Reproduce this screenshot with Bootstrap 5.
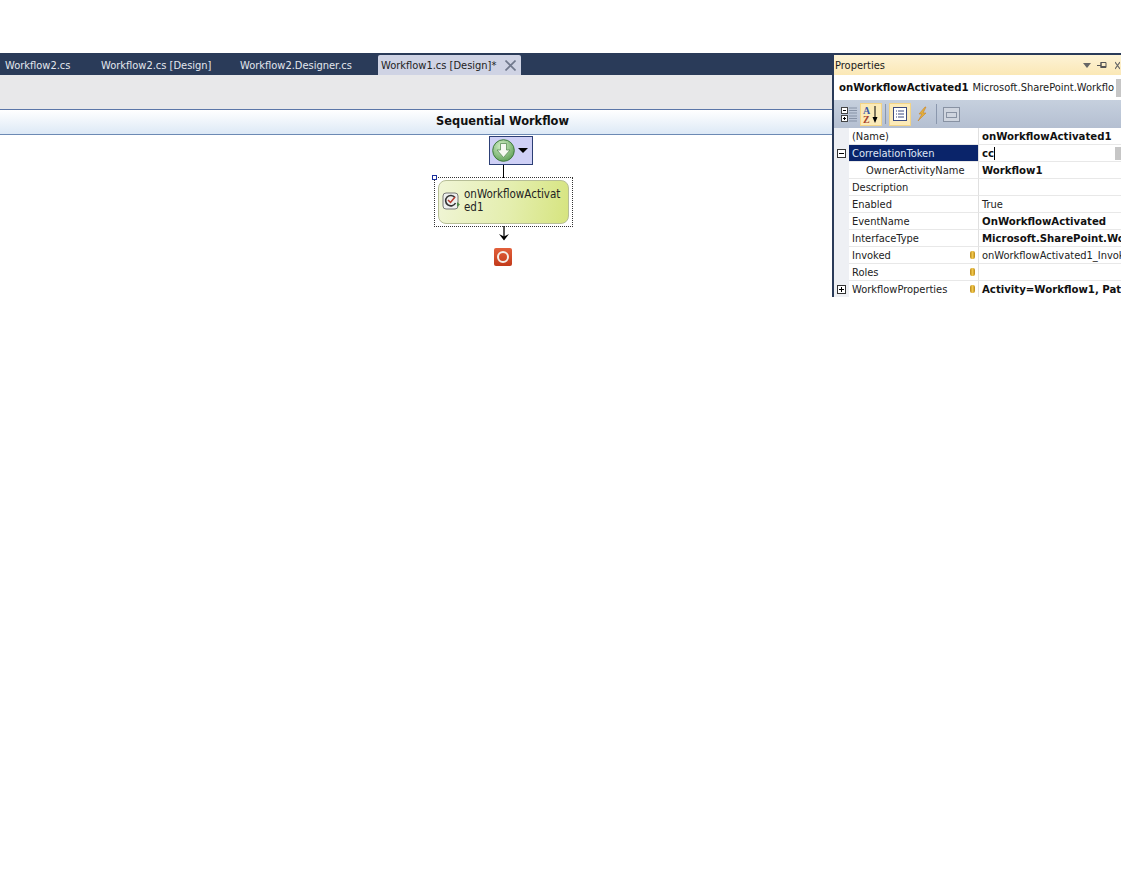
<!doctype html>
<html lang="en"><head><meta charset="utf-8"><title>Workflow designer</title>
<link href="https://cdn.jsdelivr.net/npm/bootstrap@5.3.0/dist/css/bootstrap.min.css" rel="stylesheet">
<style>
html,body{height:100%;background:#fff;overflow:hidden}
body{font-family:"DejaVu Sans Condensed","Liberation Sans",sans-serif;font-size:11px;color:#1a1a1a;line-height:17px}
.ide{width:1121px;margin-top:53px;height:244px;position:relative}
.tabbar{height:22px;background:#2a3b59;color:#e3e7ee;width:100%}
.tabitem{height:22px;line-height:25px;white-space:nowrap;flex:none}
.t1{margin-left:5px;width:96px}.t2{width:139px}.t3{width:138px}
.tabactive{background:#cfd3e4;color:#222;width:143px;height:20px;line-height:22px;margin-top:2px;padding-left:3px;padding-right:5px;border-radius:2px 2px 0 0}
.tabx{width:11px;height:11px;margin-top:5px;margin-left:auto;flex:none}
.designer{width:832px}
.greybar{height:35px;background:#e8e8ea;border-bottom:1px solid #5b76a8}
.seqhead{height:25px;border-bottom:1px solid #6c8ab4;background:linear-gradient(#fff,#dde9f6);text-align:center;font:700 11.4px/23px "DejaVu Sans",sans-serif;color:#111;padding-left:173px;width:832px}
.canvasarea{position:relative;height:600px}
.node{position:absolute}
.startbox{left:489px;top:1px;width:44px;height:29px;background:#cfd0f6;border:1px solid #2c3f75}
.startcirc{position:absolute;left:2px;top:2px;width:23px;height:23px}
.starttri{position:absolute;left:28px;top:11px;width:0;height:0;border-left:5px solid transparent;border-right:5px solid transparent;border-top:5px solid #000}
.vline{left:503px;top:30px;width:1px;height:13px;background:#000}
.selbox{left:434px;top:42px;width:139px;height:50px;border:1px dotted #333}
.handle{left:432px;top:40px;width:5px;height:5px;background:#fff;border:1px solid #1a2f9c}
.activity{left:438px;top:45px;width:131px;height:44px;border:1px solid #b7be97;border-radius:8px;background:linear-gradient(100deg,#f0f5d6 0%,#e4eeae 55%,#d6e47f 100%);padding:7px 0 0 25px;font-size:11.5px;line-height:13px;color:#222}
.acticon{left:442px;top:57px;width:18px;height:18px}
.arrow{left:498px;top:91px;width:12px;height:15px}
.stopbox{left:494px;top:113px;width:18px;height:18px;background:linear-gradient(#e2603b,#c23a1a);border-radius:2px;display:flex;align-items:center;justify-content:center}
.stopring{width:12px;height:12px;border:2px solid #f4efe9;border-radius:50%}
.props{position:absolute;left:832px;top:0;width:289px;height:244px;border-left:2px solid #2a3b59;background:#fff;overflow:hidden}
.topedge{height:2px;background:#2a3b59}
.proptitle{height:20px;background:linear-gradient(#fdf3d6,#fbe8b6);display:flex;align-items:center;justify-content:space-between;padding:0 1px;line-height:19px}
.titlebtns{gap:6px}
.objrow{height:25px;background:#fff;display:flex;align-items:center;padding:0 0 0 5px;white-space:nowrap;overflow:hidden;position:relative}
.objrow b{font-size:11.3px;font-weight:700;margin-right:4px;color:#111}
.combobtn{position:absolute;right:0;top:4px;width:5px;height:18px;background:#c6c6c6}
.toolstrip{height:28px;background:linear-gradient(#c6d0de,#b4bfd1);display:flex;align-items:center;padding-left:4px;width:100%}
.toolbtn{width:22px;height:23px;flex:none;display:flex;align-items:center;justify-content:center}
.toolon{background:#fbeab8;border:1px solid #f3d486}
.toolsep{width:1px;height:20px;background:#8a97ad;margin:0 3px;flex:none}
.gridrows{display:grid;grid-template-columns:15px 130px 1fr;grid-auto-rows:17px}
.gutter{background:#eef0f4;display:flex;align-items:center;justify-content:center}
.namecell{padding-left:3px;border-bottom:1px solid #e8e8e8;border-right:1px solid #e0e0e0;position:relative;white-space:nowrap;color:#222}
.namecell.sel{background:#0a246a;color:#dfe6f5}
.namecell.sub{padding-left:17px}
.valcell{padding-left:3px;border-bottom:1px solid #e8e8e8;white-space:nowrap;overflow:hidden;position:relative;color:#222}
.valcell b{font-size:11.3px;font-weight:700;color:#111}
.bolt{position:absolute;right:3px;top:4px;width:5px;height:8px;background:linear-gradient(90deg,#b9881a,#f0c64a 50%,#b9881a);border-radius:2px}
.plusbox{width:9px;height:9px;border:1px solid #333;position:relative;background:#fff}
.plusbox::before{content:"";position:absolute;left:1px;right:1px;top:3px;height:1px;background:#000}
.plusbox.pl::after{content:"";position:absolute;top:1px;bottom:1px;left:3px;width:1px;background:#000}
.caret-mark{display:inline-block;width:1px;height:13px;background:#000;vertical-align:-3px}
.dropbtn{position:absolute;right:0;top:2px;width:6px;height:13px;background:#c6c6c6}
</style></head>
<body>
<div class="ide">
  <div class="tabbar d-flex">
    <div class="tabitem t1">Workflow2.cs</div>
    <div class="tabitem t2">Workflow2.cs [Design]</div>
    <div class="tabitem t3">Workflow2.Designer.cs</div>
    <div class="tabitem tabactive d-flex">Workflow1.cs [Design]*
      <svg class="tabx" viewBox="0 0 11 11"><path d="M.5 .5L10.500 10.500M10.500 .5L.5 10.500" stroke="#70788c" stroke-width="1.600"/></svg></div>
  </div>
  <div class="designer">
    <div class="greybar"></div>
    <div class="seqhead">Sequential Workflow</div>
    <div class="canvasarea">
      <div class="node startbox">
        <svg class="startcirc" viewBox="0 0 23 23"><defs><radialGradient id="gc" cx=".4" cy=".3" r=".8"><stop offset="0" stop-color="#d4f0c8"/><stop offset="1" stop-color="#559a4e"/></radialGradient></defs><circle cx="11.500" cy="11.500" r="10.800" fill="url(#gc)" stroke="#3f7a3e"/><path d="M8.500 4.500h6v6.500h3.500l-6.500 7.500-6.500-7.500h3.500z" fill="#f6f9f2" stroke="#5d8f59" stroke-width=".8"/></svg>
        <div class="starttri"></div>
      </div>
      <div class="node vline"></div>
      <div class="node selbox"></div>
      <div class="node handle"></div>
      <div class="node activity">onWorkflowActivat<br>ed1</div>
      <svg class="node acticon" viewBox="0 0 18 18"><rect x="1" y="1" width="15" height="16" rx="3" fill="#eef0ee" stroke="#777"/><path d="M13 5.500A5.200 5.200 0 1 0 13.500 11" fill="none" stroke="#333" stroke-width="1.600"/><path d="M6 8l2.500 2.500L13 5" fill="none" stroke="#b5392a" stroke-width="1.500"/><path d="M15 10l3 2.500-3 2.500z" fill="#4f8c4a"/></svg>
      <svg class="node arrow" viewBox="0 0 12 15"><path d="M6 0V12" stroke="#000" stroke-width="1.300"/><path d="M1 8L6 14.500 11 8 6 10.500z" fill="#000"/></svg>
      <div class="node stopbox"><div class="stopring"></div></div>
    </div>
  </div>
  <div class="props">
    <div class="topedge"></div>
    <div class="proptitle"><span>Properties</span>
      <span class="d-flex titlebtns align-items-center">
        <svg width="8" height="5" viewBox="0 0 8 5"><path d="M0 0h8L4 5z" fill="#666"/></svg>
        <svg width="12" height="9" viewBox="0 0 12 9"><path d="M0 4.500h4M4 1.500h5v5H4zM4 1v6M4 5.500h5" fill="none" stroke="#555"/></svg>
        <svg width="5" height="9" viewBox="0 0 5 9"><path d="M0 1l5 7M5 1l-5 7" stroke="#666" stroke-width="1.200"/></svg>
      </span></div>
    <div class="objrow"><b>onWorkflowActivated1</b> Microsoft.SharePoint.Workflo<span class="combobtn"></span></div>
    <div class="toolstrip">
      <div class="toolbtn"><svg width="18" height="18" viewBox="0 0 18 18"><rect x="1.500" y="2.500" width="6" height="6" fill="#fff" stroke="#444"/><rect x="1.500" y="10.500" width="6" height="6" fill="#fff" stroke="#444"/><path d="M3 5.500h3M3 13.500h3M4.500 12v3" stroke="#000"/><path d="M9 3h8M9 5.500h8M9 8h8M9 11h8M9 13.500h8M9 16h8" stroke="#8793a6"/></svg></div>
      <div class="toolbtn toolon"><svg width="18" height="19" viewBox="0 0 18 19"><text x="1" y="8.500" font-family="Liberation Serif" font-size="10" font-weight="700" fill="#3a5aa8">A</text><text x="1" y="17.500" font-family="Liberation Serif" font-size="10" font-weight="700" fill="#a8432c">Z</text><path d="M13 1V15" stroke="#000"/><path d="M10.500 12h5L13 18z" fill="#000"/></svg></div>
      <div class="toolsep"></div>
      <div class="toolbtn toolon"><svg width="14" height="14" viewBox="0 0 14 14"><rect x=".5" y=".5" width="13" height="13" fill="#fff" stroke="#3c4a80"/><path d="M3 4h1M5 4h6M3 7h1M5 7h6M3 10h1M5 10h6" stroke="#3c4a80"/></svg></div>
      <div class="toolbtn"><svg width="12" height="16" viewBox="0 0 12 16"><path d="M9 1L3 8h3L2 15l8-8H7l3-6z" fill="#e3b23c" stroke="#c9822a" stroke-width=".6"/></svg></div>
      <div class="toolsep"></div>
      <div class="toolbtn"><svg width="17" height="15" viewBox="0 0 17 15"><rect x=".5" y=".5" width="16" height="14" fill="#cfd5df" stroke="#8892a3"/><rect x="3.500" y="5.500" width="10" height="5" fill="none" stroke="#8892a3"/></svg></div>
    </div>
    <div class="gridrows">
      <div class="gutter"></div><div class="namecell">(Name)</div><div class="valcell"><b>onWorkflowActivated1</b></div>
      <div class="gutter"><span class="plusbox"></span></div><div class="namecell sel">CorrelationToken</div><div class="valcell"><b>cc</b><span class="caret-mark"></span><span class="dropbtn"></span></div>
      <div class="gutter"></div><div class="namecell sub">OwnerActivityName</div><div class="valcell"><b>Workflow1</b></div>
      <div class="gutter"></div><div class="namecell">Description</div><div class="valcell"></div>
      <div class="gutter"></div><div class="namecell">Enabled</div><div class="valcell">True</div>
      <div class="gutter"></div><div class="namecell">EventName</div><div class="valcell"><b>OnWorkflowActivated</b></div>
      <div class="gutter"></div><div class="namecell">InterfaceType</div><div class="valcell"><b>Microsoft.SharePoint.Wo</b></div>
      <div class="gutter"></div><div class="namecell">Invoked<span class="bolt"></span></div><div class="valcell">onWorkflowActivated1_Invok</div>
      <div class="gutter"></div><div class="namecell">Roles<span class="bolt"></span></div><div class="valcell"></div>
      <div class="gutter"><span class="plusbox pl"></span></div><div class="namecell">WorkflowProperties<span class="bolt"></span></div><div class="valcell"><b>Activity=Workflow1, Pat</b></div>
    </div>
  </div>
</div>
<script src="https://cdn.jsdelivr.net/npm/bootstrap@5.3.0/dist/js/bootstrap.bundle.min.js"></script>
</body></html>
